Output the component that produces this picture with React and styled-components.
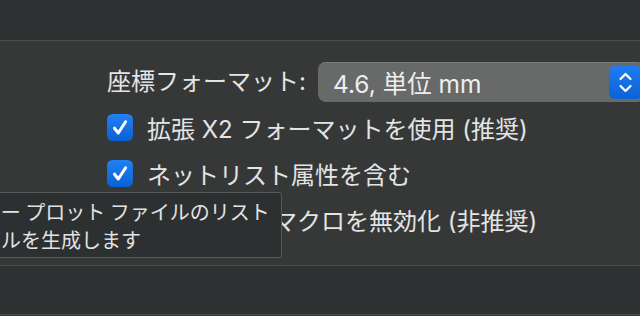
import React from "react";
import styled, { createGlobalStyle } from "styled-components";

const Global = createGlobalStyle`
  html, body { margin: 0; padding: 0; background: #363838; }
  body { font-family: "Inter", "Noto Sans CJK JP", sans-serif; color: #e4e4e4; }
`;

const Page = styled.div`
  position: relative;
  width: 640px;
  height: 316px;
  overflow: hidden;
  display: flex;
  flex-direction: column;
  background: #363838;
`;

const TopBand = styled.div`
  height: 40px;
  flex: none;
  background: #2f3233;
  border-bottom: 1px solid #4b4d4e;
`;

const Content = styled.div`
  flex: 1;
  display: flex;
  flex-direction: column;
  padding: 21px 0 0 107px;
  min-height: 0;
`;

const Footer = styled.div`
  height: 48px;
  flex: none;
  background: #2f3233;
  border-top: 1px solid #4b4d4e;
  border-bottom: 1px solid #4b4d4e;
  margin-bottom: 1px;
`;

const FormatRow = styled.div`
  display: flex;
  align-items: center;
  gap: 12px;
  height: 40px;
  margin-bottom: 11px;
`;

const Label = styled.span`
  font-size: 24px;
  line-height: 28px;
  white-space: nowrap;
  color: #e4e4e4;
`;

const Select = styled.div`
  flex: none;
  width: 327px;
  height: 40px;
  box-sizing: border-box;
  border-radius: 8px;
  background: #686969;
  border-top: 1px solid #7a7b7b;
  display: flex;
  align-items: center;
  justify-content: space-between;
  padding: 0 3px 0 15px;
  font-size: 24.5px;
  color: #eeeeee;
  white-space: nowrap;
`;

const Stepper = styled.div`
  width: 33px;
  height: 33px;
  border-radius: 6px;
  background: linear-gradient(#1f7cf2, #0b62d6);
  display: flex;
  align-items: center;
  justify-content: center;
`;

const CheckRow = styled.label`
  display: flex;
  align-items: center;
  gap: 14px;
  height: 28px;
  margin-bottom: 18px;
  font-size: 24px;
  white-space: nowrap;
  color: #e4e4e4;
`;

const Box = styled.span`
  flex: none;
  width: 26px;
  height: 27px;
  display: block;
`;

const Tooltip = styled.div`
  position: absolute;
  left: -68px;
  top: 192px;
  width: 350px;
  height: 66px;
  box-sizing: border-box;
  background: #2d3030;
  border: 1px solid #575a5a;
  border-radius: 3px;
  padding: 5px 8px;
  font-family: "Noto Sans CJK JP", sans-serif;
  font-size: 20px;
  line-height: 28px;
  color: #e2e2e2;
  white-space: nowrap;
`;

const TipLine = styled.div``;

function CheckBox() {
  return (
    <Box>
      <svg width="26" height="27" viewBox="0 0 26 27">
        <defs>
          <linearGradient id="cbg" x1="0" y1="0" x2="0" y2="1">
            <stop offset="0" stopColor="#2281f3" />
            <stop offset="1" stopColor="#0a60d2" />
          </linearGradient>
        </defs>
        <rect x="0" y="0" width="26" height="27" rx="5.5" fill="url(#cbg)" />
        <path d="M7.5 14.2 L11.3 19 L18.6 7.8" fill="none" stroke="#fff" strokeWidth="3" strokeLinecap="round" strokeLinejoin="round" />
      </svg>
    </Box>
  );
}

function Chevrons() {
  return (
    <svg width="33" height="33" viewBox="0 0 33 33">
      <path d="M11.5 13 L16.5 8 L21.5 13" fill="none" stroke="#fff" strokeWidth="2.2" strokeLinecap="round" strokeLinejoin="round" />
      <path d="M11.5 20 L16.5 25 L21.5 20" fill="none" stroke="#fff" strokeWidth="2.2" strokeLinecap="round" strokeLinejoin="round" />
    </svg>
  );
}

export default function App() {
  return (
    <>
      <Global />
      <Page>
        <TopBand />
        <Content>
          <FormatRow>
            <Label>座標フォーマット:</Label>
            <Select>
              <span>4.6, 単位 mm</span>
              <Stepper>
                <Chevrons />
              </Stepper>
            </Select>
          </FormatRow>
          <CheckRow>
            <CheckBox />
            拡張 X2 フォーマットを使用 (推奨)
          </CheckRow>
          <CheckRow>
            <CheckBox />
            ネットリスト属性を含む
          </CheckRow>
          <CheckRow>
            <CheckBox />
            アパーチャ マクロを無効化 (非推奨)
          </CheckRow>
        </Content>
        <Footer />
        <Tooltip>
          <TipLine>ガーバー プロット ファイルのリスト</TipLine>
          <TipLine>ファイルを生成します</TipLine>
        </Tooltip>
      </Page>
    </>
  );
}
